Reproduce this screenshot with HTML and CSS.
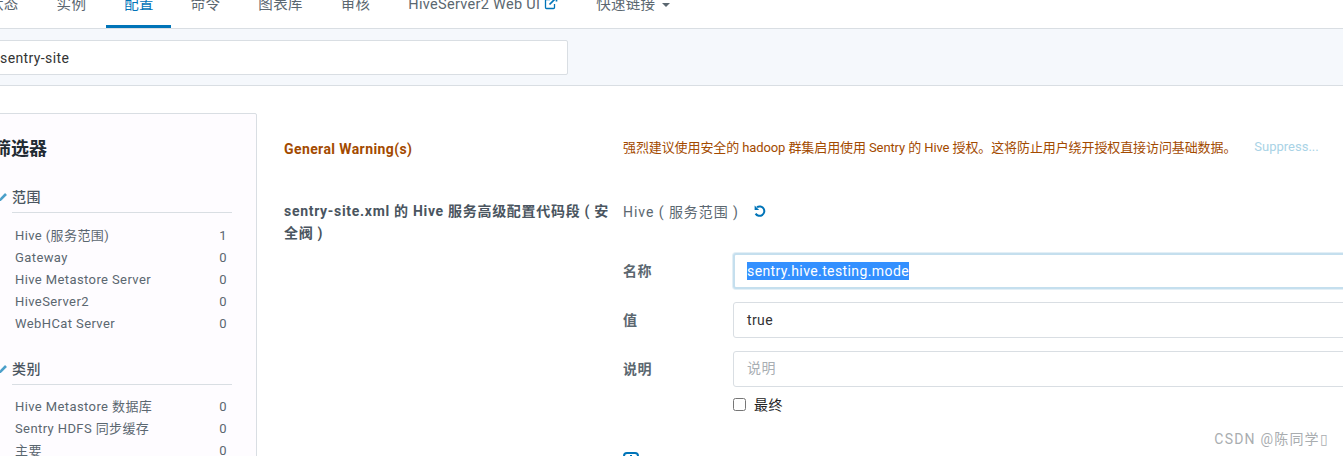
FILE: index.html
```html
<!DOCTYPE html>
<html lang="zh">
<head>
<meta charset="utf-8">
<title>sentry-site</title>
<link rel="stylesheet" href="styles.css">
</head>
<body>
<div class="page">
  <nav class="tabs">
    <a class="tab">状态</a>
    <a class="tab">实例</a>
    <a class="tab active">配置</a>
    <a class="tab">命令</a>
    <a class="tab">图表库</a>
    <a class="tab">审核</a>
    <a class="tab">HiveServer2 Web UI
      <svg class="ext" width="14" height="14" viewBox="0 0 14 14"><path d="M10.5 8v3.5a1 1 0 0 1-1 1h-7a1 1 0 0 1-1-1v-7a1 1 0 0 1 1-1H6" fill="none" stroke="#0074b8" stroke-width="1.3"/><path d="M5.5 8.5 12 2M8.5 1.5H12.5V5.5" fill="none" stroke="#0074b8" stroke-width="1.7"/></svg>
    </a>
    <a class="tab">快速链接 <span class="caret"></span></a>
  </nav>
  <div class="searchbar">
    <div class="search">sentry-site</div>
  </div>
  <div class="main">
    <aside class="filters">
      <h2 class="filters-title">筛选器</h2>
      <section class="group">
        <h3 class="group-head"><svg class="tick" width="8" height="8" viewBox="0 0 8 8"><path d="M-1 8 6 1" stroke="#4b9fc9" stroke-width="2.6"/></svg><span class="group-name">范围</span></h3>
        <ul class="rows">
          <li class="row"><span>Hive (服务范围)</span><span>1</span></li>
          <li class="row"><span>Gateway</span><span>0</span></li>
          <li class="row"><span>Hive Metastore Server</span><span>0</span></li>
          <li class="row"><span>HiveServer2</span><span>0</span></li>
          <li class="row"><span>WebHCat Server</span><span>0</span></li>
        </ul>
      </section>
      <section class="group">
        <h3 class="group-head"><svg class="tick" width="8" height="8" viewBox="0 0 8 8"><path d="M-1 8 6 1" stroke="#4b9fc9" stroke-width="2.6"/></svg><span class="group-name">类别</span></h3>
        <ul class="rows">
          <li class="row"><span>Hive Metastore 数据库</span><span>0</span></li>
          <li class="row"><span>Sentry HDFS 同步缓存</span><span>0</span></li>
          <li class="row"><span>主要</span><span>0</span></li>
        </ul>
      </section>
    </aside>
    <div class="content">
      <div class="config warn-row">
        <div class="config-label warn-label">General Warning(s)</div>
        <div class="warn-body">
          <span class="warn-text">强烈建议使用安全的 hadoop 群集启用使用 Sentry 的 Hive 授权。这将防止用户绕开授权直接访问基础数据。</span>
          <a class="suppress">Suppress...</a>
        </div>
      </div>
      <div class="config">
        <div class="config-label site-label">sentry-site.xml 的 Hive 服务高级配置代码段 ( 安全阀 )</div>
        <div class="config-body">
          <div class="scope">Hive ( 服务范围 )
            <svg class="undo" width="12" height="12" viewBox="0 0 12 12"><path d="M3 2.2A4.7 4.7 0 1 1 1.6 8.6" fill="none" stroke="#0074b8" stroke-width="2"/><path d="M.6 .4v4.6h4.6z" fill="#0074b8"/></svg>
          </div>
          <div class="field field-first"><label class="field-label">名称</label><div class="input focus"><span class="selected">sentry.hive.testing.mode</span></div></div>
          <div class="field"><label class="field-label">值</label><div class="input">true</div></div>
          <div class="field"><label class="field-label">说明</label><div class="input placeholder">说明</div></div>
          <label class="final"><input class="check" type="checkbox"><span>最终</span></label>
          <svg class="add" width="16" height="16" viewBox="0 0 16 16"><rect x="1" y="1" width="14" height="14" rx="3" fill="none" stroke="#0074b8" stroke-width="2"/><path d="M8 3v10M4 8h8" stroke="#0074b8" stroke-width="2"/></svg>
        </div>
      </div>
    </div>
  </div>
  <div class="watermark">CSDN @陈同学▯</div>
</div>
</body>
</html>
```
FILE: styles.css
```css
* { box-sizing: border-box; }
html, body { margin: 0; padding: 0; }
body {
  font-family: Roboto, "Noto Sans CJK SC", sans-serif;
  font-size: 14px;
  letter-spacing: .4px;
  color: #5b6770;
  background: #fff;
}
.page { position: relative; width: 1343px; height: 456px; overflow: hidden; }

.tabs {
  display: flex;
  height: 29px;
  margin-left: -30px;
  border-bottom: 1px solid #d9dee3;
  align-items: flex-start;
}
.tab {
  display: block;
  padding: 0 19px;
  margin-top: -8px;
  line-height: 25px;
  height: 37px;
  font-size: 14.5px;
  letter-spacing: .3px;
  color: #5b6770;
  white-space: nowrap;
}
.tab.active {
  height: 36px;
  margin: -8px .5px 0 1px;
  padding: 0 17.4px 0 18px;
  color: #0074b8;
  border-bottom: 3px solid #0074b8;
}
.ext { vertical-align: -1px; }
.caret {
  display: inline-block;
  width: 0;
  height: 0;
  margin-left: 3px;
  vertical-align: 2px;
  border-left: 4px solid transparent;
  border-right: 4px solid transparent;
  border-top: 4px solid #5b6770;
}

.searchbar {
  height: 57px;
  padding-top: 11px;
  background: #f5f8fc;
  border-bottom: 1px solid #d9dee3;
}
.search {
  width: 588px;
  height: 35px;
  margin-left: -20px;
  padding-left: 19px;
  line-height: 35px;
  font-size: 14px;
  color: #333;
  background: #fff;
  border: 1px solid #d9dee3;
  border-radius: 2px;
}

.main { display: flex; padding-top: 27px; }
.filters {
  flex: none;
  width: 277px;
  height: 400px;
  margin-left: -20px;
  padding: 23px 24px 0 19px;
  background: #fefcff;
  border: 1px solid #d9dee3;
  border-radius: 2px;
}
.filters-title {
  margin: 0 0 0 -7px;
  font-size: 18px;
  letter-spacing: 0;
  line-height: 24px;
  font-weight: 700;
  color: #222b33;
}
.group { margin-top: 24px; }
.group + .group { margin-top: 22px; }
.group-head {
  display: flex;
  align-items: flex-start;
  gap: 4px;
  margin: 0;
  font-size: 14px;
  font-weight: 500;
  color: #4a5560;
}
.tick { flex: none; margin-top: 8px; }
.group-name {
  flex: 1;
  line-height: 24px;
  padding-bottom: 3px;
  border-bottom: 1px solid #d9dee3;
}
.rows { list-style: none; margin: 12px 0 0; padding: 0 5px 0 15px; }
.group + .group .rows { margin-top: 11px; }
.row {
  display: flex;
  justify-content: space-between;
  height: 22px;
  line-height: 22px;
  font-size: 13px;
  color: #5b6770;
}

.content { flex: 1; min-width: 0; padding: 25px 0 0 27px; }
.config { display: flex; }
.config-label {
  flex: none;
  width: 339px;
  padding-right: 12px;
  font-size: 14px;
  line-height: 22px;
  font-weight: 700;
  color: #4a5560;
}
.site-label { letter-spacing: .7px; padding-right: 10px; }
.warn-row { height: 62px; }
.warn-label { color: #a34a00; }
.warn-body { display: flex; align-items: center; height: 22px; margin-top: -3px; white-space: nowrap; }
.warn-text { font-size: 13px; letter-spacing: -.1px; color: #a34a00; }
.suppress { margin-left: 18px; font-size: 13px; letter-spacing: 0; color: #a9d3e6; }
.config-body { flex: 1; min-width: 0; }
.scope { display: flex; align-items: center; gap: 15px; height: 22px; font-size: 14px; letter-spacing: .95px; }
.undo { flex: none; }
.field { display: flex; align-items: center; margin-top: 13px; margin-right: -200px; }
.field-first { margin-top: 31px; }
.field-label { flex: none; width: 110px; margin-bottom: 2px; font-size: 14px; font-weight: 700; color: #5b6770; }
.input {
  flex: 1;
  height: 36px;
  padding: 0 13px;
  line-height: 34px;
  font-size: 14px;
  color: #333;
  background: #fff;
  border: 1px solid #d9dee3;
  border-radius: 3px;
}
.input.focus {
  padding: 0 12px;
  line-height: 33px;
  border: 2px solid #c5dfee;
  box-shadow: 0 0 0 1px #e3eff6;
}
.selected { display: inline-block; line-height: 18px; background: #3390ff; color: #fff; }
.placeholder { line-height: 33px; color: #a8aeb3; }
.final { display: flex; align-items: center; gap: 8px; margin: 6px 0 0 110px; height: 22px; color: #222; }
.check { margin: 0; width: 13px; height: 13px; }
.add { display: block; margin-top: 37px; }

.watermark {
  position: absolute;
  right: 14px;
  bottom: 8px;
  font-size: 14px;
  letter-spacing: 1.2px;
  color: #a9adb0;
}
```
